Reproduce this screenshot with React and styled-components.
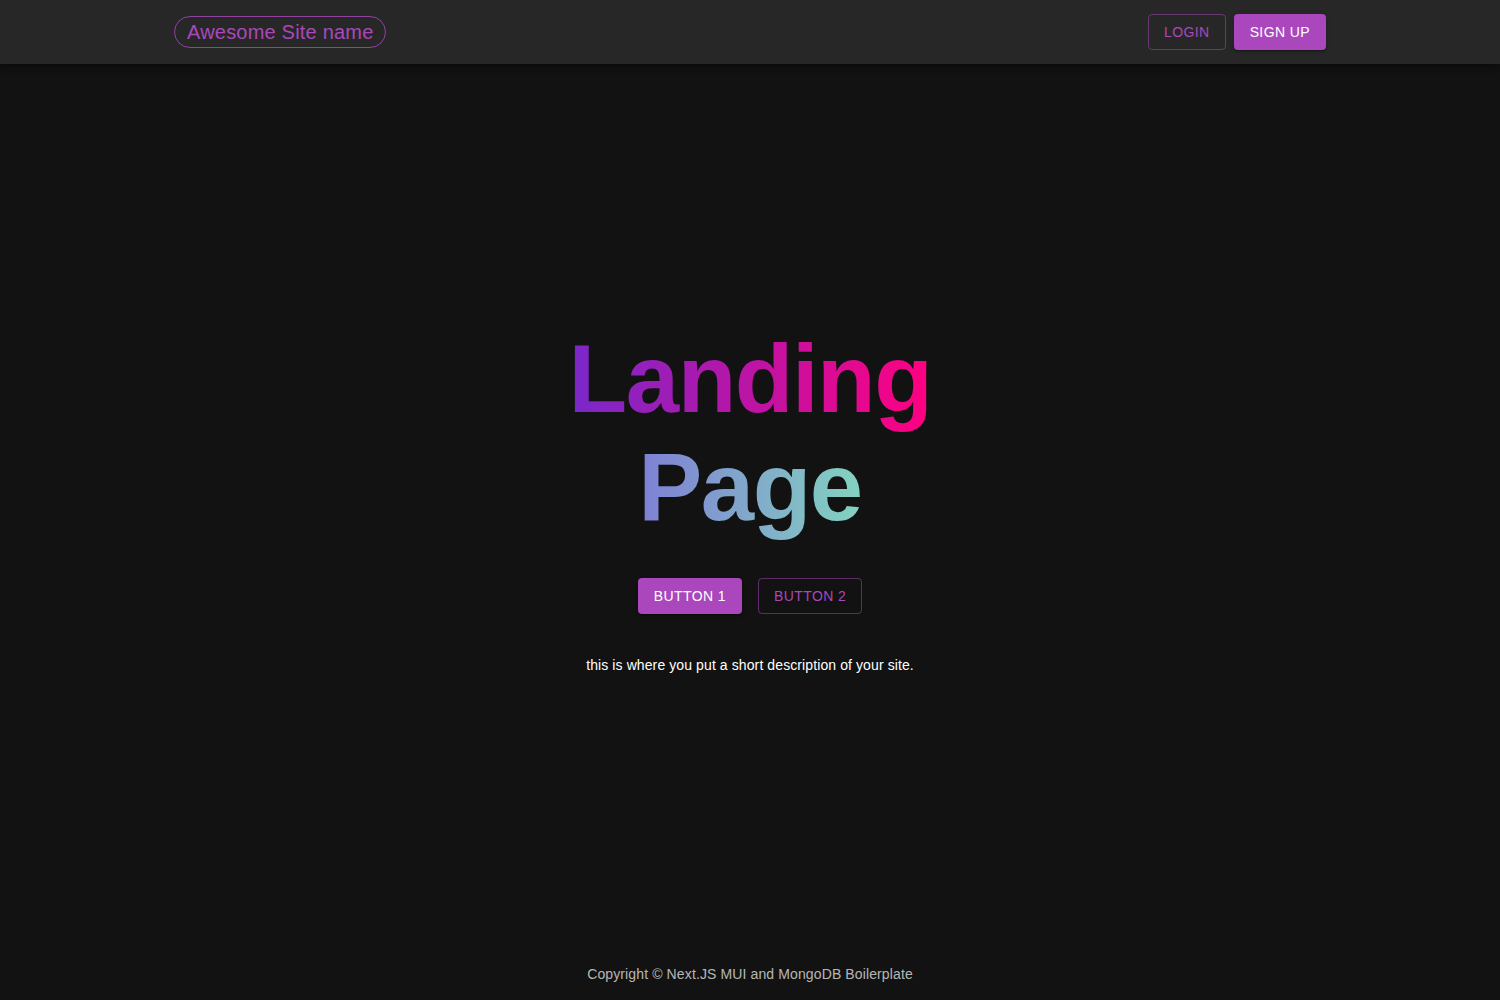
import styled, { createGlobalStyle, css } from "styled-components";

const GlobalStyle = createGlobalStyle`
  html, body {
    margin: 0;
    padding: 0;
    background-color: #121212;
    color: #fff;
    font-family: "Liberation Sans", Arial, sans-serif;
  }
  * {
    box-sizing: border-box;
  }
`;

const Page = styled.div`
  min-height: 1000px;
  display: flex;
  flex-direction: column;
`;

const AppBar = styled.header`
  height: 64px;
  background-color: #272727;
  box-shadow: 0 2px 4px -1px rgba(0, 0, 0, 0.2), 0 4px 5px 0 rgba(0, 0, 0, 0.14),
    0 1px 10px 0 rgba(0, 0, 0, 0.12);
`;

const Container = styled.div`
  max-width: 1200px;
  margin: 0 auto;
  padding: 0 24px;
  height: 100%;
  display: flex;
  align-items: center;
  justify-content: space-between;
`;

const Logo = styled.a`
  display: inline-flex;
  align-items: center;
  height: 32px;
  padding: 0 12px;
  border: 1px solid rgba(171, 71, 188, 0.8);
  border-radius: 16px;
  color: #ab47bc;
  font-size: 20px;
  letter-spacing: 0.2px;
  text-decoration: none;
`;

const Actions = styled.div`
  display: flex;
  gap: 8px;
`;

const Button = styled.button`
  font-family: "Liberation Sans", Arial, sans-serif;
  font-size: 14px;
  font-weight: 400;
  line-height: 24px;
  letter-spacing: 0.4px;
  text-transform: uppercase;
  padding: 6px 16px;
  border-radius: 4px;
  cursor: pointer;

  ${({ $variant }) =>
    $variant === "outlined"
      ? css`
          background: transparent;
          color: #ab47bc;
          border: 1px solid rgba(171, 71, 188, 0.5);
          padding: 5px 15px;
        `
      : css`
          background: #ab47bc;
          color: #fff;
          border: none;
          box-shadow: 0 3px 1px -2px rgba(0, 0, 0, 0.2),
            0 2px 2px 0 rgba(0, 0, 0, 0.14), 0 1px 5px 0 rgba(0, 0, 0, 0.12);
        `}
`;

const Main = styled.main`
  flex: 1;
  display: flex;
  flex-direction: column;
  align-items: center;
  justify-content: center;
  padding-bottom: 26px;
`;

const Title = styled.h1`
  margin: 0;
  font-size: 96px;
  font-weight: 700;
  line-height: 1.12;
  letter-spacing: -1.5px;
  text-align: center;
`;

const Gradient = styled.span`
  background-image: ${({ $from, $to }) =>
    `linear-gradient(to right, ${$from}, ${$to})`};
  -webkit-background-clip: text;
  background-clip: text;
  color: transparent;
`;

const ButtonRow = styled.div`
  display: flex;
  gap: 16px;
  margin-top: 37px;
`;

const Description = styled.p`
  margin: 39px 0 0;
  font-size: 14px;
  line-height: 24px;
  letter-spacing: 0.1px;
`;

const Footer = styled.footer`
  padding: 0 0 16px;
  text-align: center;
  font-size: 14px;
  line-height: 20px;
  letter-spacing: 0.12px;
  color: rgba(255, 255, 255, 0.7);
`;

function App() {
  return (
    <>
      <GlobalStyle />
      <Page>
        <AppBar>
          <Container>
            <Logo href="#">Awesome Site name</Logo>
            <Actions>
              <Button $variant="outlined">Login</Button>
              <Button>Sign up</Button>
            </Actions>
          </Container>
        </AppBar>
        <Main>
          <Title>
            <Gradient $from="#7928ca" $to="#ff0080">
              Landing
            </Gradient>
            <br />
            <Gradient $from="#7f7fd5" $to="#83d3c0">
              Page
            </Gradient>
          </Title>
          <ButtonRow>
            <Button>Button 1</Button>
            <Button $variant="outlined">Button 2</Button>
          </ButtonRow>
          <Description>
            this is where you put a short description of your site.
          </Description>
        </Main>
        <Footer>Copyright © Next.JS MUI and MongoDB Boilerplate</Footer>
      </Page>
    </>
  );
}

export default App;
